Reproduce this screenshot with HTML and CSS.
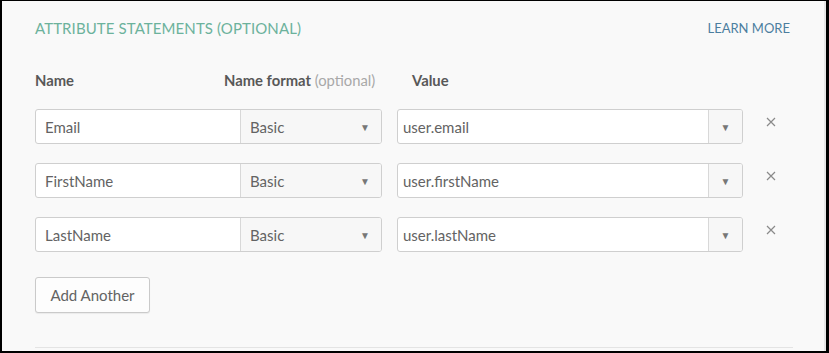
FILE: index.html
```html
<!DOCTYPE html>
<html lang="en">
<head>
    <meta charset="UTF-8">
    <meta name="viewport" content="width=device-width, initial-scale=1.0">
    <title>Attribute Statements</title>
    <link rel="stylesheet" href="styles.css">
</head>
<body>
    <div class="frame">
        <div class="section">
            <!-- Cabecera de la sección -->
            <div class="section-head">
                <h2 class="section-title">ATTRIBUTE STATEMENTS (OPTIONAL)</h2>
                <a class="learn-more" href="#">LEARN MORE</a>
            </div>

            <div class="col-heads">
                <span class="head-name">Name</span>
                <span class="head-format">Name format <em>(optional)</em></span>
                <span class="head-value">Value</span>
            </div>

            <div class="attr-row">
                <div class="name-group">
                    <input class="name-input" type="text" value="Email">
                    <div class="format-select">Basic<span class="caret">&#9660;</span></div>
                </div>
                <div class="value-group">
                    <input class="value-input" type="text" value="user.email">
                    <div class="value-drop"><span class="caret">&#9660;</span></div>
                </div>
                <button class="remove" title="Remove">
                    <svg width="10" height="10" viewBox="0 0 10 10"><path d="M1 1L9 9M9 1L1 9" stroke="#8a8a8a" stroke-width="1.2"/></svg>
                </button>
            </div>

            <div class="attr-row">
                <div class="name-group">
                    <input class="name-input" type="text" value="FirstName">
                    <div class="format-select">Basic<span class="caret">&#9660;</span></div>
                </div>
                <div class="value-group">
                    <input class="value-input" type="text" value="user.firstName">
                    <div class="value-drop"><span class="caret">&#9660;</span></div>
                </div>
                <button class="remove" title="Remove">
                    <svg width="10" height="10" viewBox="0 0 10 10"><path d="M1 1L9 9M9 1L1 9" stroke="#8a8a8a" stroke-width="1.2"/></svg>
                </button>
            </div>

            <div class="attr-row">
                <div class="name-group">
                    <input class="name-input" type="text" value="LastName">
                    <div class="format-select">Basic<span class="caret">&#9660;</span></div>
                </div>
                <div class="value-group">
                    <input class="value-input" type="text" value="user.lastName">
                    <div class="value-drop"><span class="caret">&#9660;</span></div>
                </div>
                <button class="remove" title="Remove">
                    <svg width="10" height="10" viewBox="0 0 10 10"><path d="M1 1L9 9M9 1L1 9" stroke="#8a8a8a" stroke-width="1.2"/></svg>
                </button>
            </div>

            <button class="add-btn">Add Another</button>

            <div class="divider"></div>
        </div>
    </div>
</body>
</html>
```

FILE: styles.css
```css
body {
    margin: 0;
    font-family: Lato, "Liberation Sans", sans-serif;
    color: #636363;
}
.frame {
    box-sizing: border-box;
    height: 353px;
    border-top: 1px solid #000;
    border-left: 2px solid #000;
    border-right: 3px solid #000;
    border-bottom: 2px solid #000;
    background-color: #f9f9f9;
    box-shadow: inset -2px 0 0 #e6e6e6;
    overflow: hidden;
}
.section {
    padding: 0 33px;
}
.section-head {
    display: flex;
    justify-content: space-between;
    align-items: center;
    padding-top: 16px;
    height: 21px;
}
.section-title {
    margin: 0;
    font-size: 15px;
    font-weight: 400;
    letter-spacing: 0.1px;
    color: #6cb29c;
}
.learn-more {
    margin-right: 3px;
    font-size: 13px;
    color: #4c7e9f;
    text-decoration: none;
}
.col-heads {
    display: flex;
    margin-top: 33px;
    font-size: 14.8px;
    font-weight: 700;
    color: #585858;
}
.head-name {
    width: 189px;
}
.head-format {
    width: 188px;
}
.head-format em {
    font-style: normal;
    font-weight: 400;
    color: #a8a8a8;
}
.attr-row {
    display: flex;
    align-items: center;
    margin-top: 20px;
    height: 35px;
}
.attr-row + .attr-row {
    margin-top: 19px;
}
.name-group,
.value-group {
    display: flex;
    box-sizing: border-box;
    height: 35px;
    border: 1px solid #cfcfcf;
    border-radius: 3px;
    background-color: #fff;
    overflow: hidden;
}
.name-group {
    width: 347px;
}
.value-group {
    width: 346px;
    margin-left: 15px;
}
input[type="text"] {
    border: none;
    outline: none;
    font-family: inherit;
    font-size: 15px;
    color: #636363;
    background: transparent;
}
.name-input {
    width: 204px;
    padding: 0 9px;
    box-sizing: border-box;
}
.format-select {
    flex: 1;
    display: flex;
    align-items: center;
    justify-content: space-between;
    padding: 0 11px 0 9px;
    border-left: 1px solid #d8d8d8;
    background-color: #f7f7f7;
    font-size: 15px;
}
.value-input {
    flex: 1;
    padding: 0 5px;
}
.value-drop {
    width: 33px;
    display: flex;
    align-items: center;
    justify-content: center;
    border-left: 1px solid #d8d8d8;
    background-color: #f7f7f7;
}
.caret {
    font-size: 10px;
    color: #777;
}
.remove {
    margin-left: 23px;
    margin-top: -9px;
    padding: 0;
    border: none;
    background: none;
    display: flex;
}
.add-btn {
    margin-top: 25px;
    width: 115px;
    height: 36px;
    border: 1px solid #cacaca;
    border-radius: 3px;
    background-color: #fdfdfd;
    font-family: inherit;
    font-size: 15px;
    color: #636363;
    box-shadow: 0 1px 1px rgba(0, 0, 0, 0.06);
}
.divider {
    margin-top: 34px;
    height: 1px;
    background-color: #e4e4e4;
}
```
